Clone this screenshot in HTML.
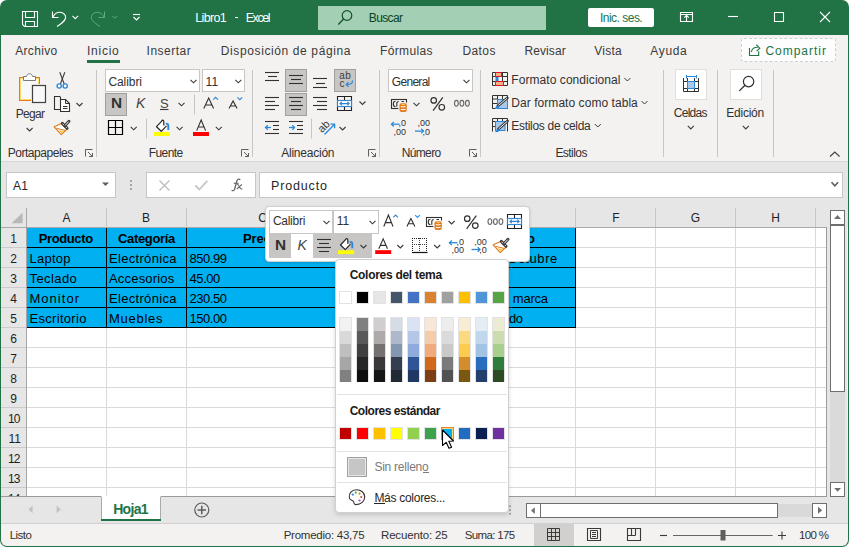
<!DOCTYPE html>
<html><head><meta charset="utf-8"><style>
html,body{margin:0;padding:0;background:#fff;width:849px;height:547px;overflow:hidden}
body{font-family:"Liberation Sans",sans-serif;position:relative}
.a{position:absolute;box-sizing:border-box}
.t{position:absolute;white-space:pre;line-height:1}
svg.a{overflow:visible}
</style></head><body>
<div class="a" style="left:0px;top:0px;width:849px;height:547px;background:#217346;border-radius:7px 7px 7px 7px"></div>
<div class="a" style="left:1px;top:35px;width:847px;height:511px;background:#f3f2f1;border-radius:0 0 6px 6px"></div>
<div class="t" style="left:195.30px;top:12px;font-size:12.5px;color:#fff;letter-spacing:-0.690px;">Libro1</div>
<div class="a" style="left:235px;top:17px;width:3.3px;height:1.2px;background:#fff"></div>
<div class="t" style="left:245.70px;top:12px;font-size:12.5px;color:#fff;letter-spacing:-1.413px;">Excel</div>
<div class="a" style="left:318px;top:6px;width:228px;height:24px;background:#a3cfb4"></div>
<div class="t" style="left:368.80px;top:12px;font-size:12px;color:#0b4424;letter-spacing:-0.630px;">Buscar</div>
<div class="a" style="left:588px;top:8px;width:66px;height:19px;background:#fff;border-radius:2px"></div>
<div class="t" style="left:600.00px;top:12px;font-size:12px;color:#217346;letter-spacing:-0.517px;">Inic. ses.</div>
<div class="t" style="left:15.20px;top:45px;font-size:12px;color:#3b3a39;letter-spacing:0.333px;">Archivo</div>
<div class="t" style="left:87.00px;top:45px;font-size:12px;color:#3b3a39;letter-spacing:0.740px;">Inicio</div>
<div class="t" style="left:146.60px;top:45px;font-size:12px;color:#3b3a39;letter-spacing:0.500px;">Insertar</div>
<div class="t" style="left:220.80px;top:45px;font-size:12px;color:#3b3a39;letter-spacing:0.612px;">Disposición de página</div>
<div class="t" style="left:380.00px;top:45px;font-size:12px;color:#3b3a39;letter-spacing:0.357px;">Fórmulas</div>
<div class="t" style="left:462.50px;top:45px;font-size:12px;color:#3b3a39;letter-spacing:0.387px;">Datos</div>
<div class="t" style="left:524.40px;top:45px;font-size:12px;color:#3b3a39;letter-spacing:0.100px;">Revisar</div>
<div class="t" style="left:594.30px;top:45px;font-size:12px;color:#3b3a39;letter-spacing:0.250px;">Vista</div>
<div class="t" style="left:650.30px;top:45px;font-size:12px;color:#3b3a39;letter-spacing:0.662px;">Ayuda</div>
<div class="a" style="left:87px;top:60px;width:33px;height:3px;background:#217346"></div>
<div class="a" style="left:741px;top:38px;width:95px;height:24px;background:#fdfdfd;border:1px dashed #cfcfcf;border-radius:3px"></div>
<div class="t" style="left:765.40px;top:45px;font-size:12px;color:#217346;letter-spacing:0.987px;">Compartir</div>
<div class="a" style="left:1px;top:161px;width:847px;height:1px;background:#d8d6d4"></div>
<div class="a" style="left:1px;top:162px;width:847px;height:65px;background:#e6e6e6"></div>
<div class="a" style="left:96px;top:70px;width:1px;height:87px;background:#c8c6c4"></div>
<div class="a" style="left:252px;top:70px;width:1px;height:87px;background:#c8c6c4"></div>
<div class="a" style="left:379px;top:70px;width:1px;height:87px;background:#c8c6c4"></div>
<div class="a" style="left:480px;top:70px;width:1px;height:87px;background:#c8c6c4"></div>
<div class="a" style="left:663px;top:70px;width:1px;height:87px;background:#c8c6c4"></div>
<div class="a" style="left:717px;top:70px;width:1px;height:87px;background:#c8c6c4"></div>
<div class="a" style="left:773px;top:70px;width:1px;height:87px;background:#c8c6c4"></div>
<div class="t" style="left:7.70px;top:146.5px;font-size:12px;color:#323130;letter-spacing:-0.464px;">Portapapeles</div>
<div class="t" style="left:15.70px;top:107.7px;font-size:12px;color:#323130;letter-spacing:-0.650px;">Pegar</div>
<div class="t" style="left:148.70px;top:146.5px;font-size:12px;color:#323130;letter-spacing:-0.550px;">Fuente</div>
<div class="t" style="left:281.20px;top:146.5px;font-size:12px;color:#323130;letter-spacing:-0.228px;">Alineación</div>
<div class="t" style="left:401.70px;top:146.5px;font-size:12px;color:#323130;letter-spacing:-0.640px;">Número</div>
<div class="t" style="left:555.40px;top:146.5px;font-size:12px;color:#323130;letter-spacing:-0.558px;">Estilos</div>
<div class="t" style="left:511.30px;top:74px;font-size:12px;color:#323130;letter-spacing:0.064px;">Formato condicional</div>
<div class="t" style="left:511.30px;top:97px;font-size:12px;color:#323130;letter-spacing:0.052px;">Dar formato como tabla</div>
<div class="t" style="left:511.30px;top:120px;font-size:12px;color:#323130;letter-spacing:-0.307px;">Estilos de celda</div>
<div class="t" style="left:673.70px;top:106.5px;font-size:12px;color:#323130;letter-spacing:-0.690px;">Celdas</div>
<div class="t" style="left:726.30px;top:106.5px;font-size:12px;color:#323130;letter-spacing:-0.242px;">Edición</div>
<div class="a" style="left:105px;top:69px;width:95px;height:23px;background:#fff;border:1px solid #c8c6c4"></div>
<div class="t" style="left:108.40px;top:75.5px;font-size:12px;color:#323130;letter-spacing:-0.067px;">Calibri</div>
<div class="a" style="left:202px;top:69px;width:43px;height:23px;background:#fff;border:1px solid #c8c6c4"></div>
<div class="t" style="left:205.60px;top:75.5px;font-size:12px;color:#323130;">11</div>
<div class="a" style="left:388px;top:69px;width:85px;height:23px;background:#fff;border:1px solid #c8c6c4"></div>
<div class="t" style="left:391.80px;top:75.5px;font-size:12px;color:#323130;letter-spacing:-0.700px;">General</div>
<div class="a" style="left:105px;top:93px;width:22px;height:23px;background:#c8c6c4;border:1px solid #a19f9d"></div>
<div class="a" style="left:285px;top:69px;width:22px;height:23px;background:#c8c6c4;border:1px solid #a19f9d"></div>
<div class="a" style="left:285px;top:93px;width:22px;height:23px;background:#c8c6c4;border:1px solid #a19f9d"></div>
<div class="a" style="left:334px;top:69px;width:22px;height:23px;background:#c8c6c4;border:1px solid #a19f9d"></div>
<div class="a" style="left:675px;top:69px;width:32px;height:31px;background:#fff;border:1px solid #e1dfdd"></div>
<div class="a" style="left:730px;top:69px;width:32px;height:31px;background:#fff;border:1px solid #e1dfdd"></div>
<div class="a" style="left:6px;top:172px;width:110px;height:26px;background:#fff;border:1px solid #c6c6c6"></div>
<div class="t" style="left:13.00px;top:180px;font-size:12px;color:#262626;letter-spacing:0.300px;">A1</div>
<div class="a" style="left:146px;top:172px;width:110px;height:26px;background:#fff;border:1px solid #c6c6c6"></div>
<div class="a" style="left:259px;top:172px;width:584px;height:26px;background:#fff;border:1px solid #c6c6c6"></div>
<div class="t" style="left:271.00px;top:180px;font-size:12.5px;color:#262626;letter-spacing:0.850px;">Producto</div>
<div class="a" style="left:27px;top:228px;width:800px;height:269px;background:#fff"></div>
<div class="a" style="left:27px;top:247px;width:800px;height:1px;background:#dadada"></div>
<div class="a" style="left:27px;top:267px;width:800px;height:1px;background:#dadada"></div>
<div class="a" style="left:27px;top:287px;width:800px;height:1px;background:#dadada"></div>
<div class="a" style="left:27px;top:307px;width:800px;height:1px;background:#dadada"></div>
<div class="a" style="left:27px;top:327px;width:800px;height:1px;background:#dadada"></div>
<div class="a" style="left:27px;top:347px;width:800px;height:1px;background:#dadada"></div>
<div class="a" style="left:27px;top:367px;width:800px;height:1px;background:#dadada"></div>
<div class="a" style="left:27px;top:387px;width:800px;height:1px;background:#dadada"></div>
<div class="a" style="left:27px;top:407px;width:800px;height:1px;background:#dadada"></div>
<div class="a" style="left:27px;top:427px;width:800px;height:1px;background:#dadada"></div>
<div class="a" style="left:27px;top:447px;width:800px;height:1px;background:#dadada"></div>
<div class="a" style="left:27px;top:467px;width:800px;height:1px;background:#dadada"></div>
<div class="a" style="left:27px;top:487px;width:800px;height:1px;background:#dadada"></div>
<div class="a" style="left:106px;top:228px;width:1px;height:269px;background:#dadada"></div>
<div class="a" style="left:186px;top:228px;width:1px;height:269px;background:#dadada"></div>
<div class="a" style="left:575px;top:228px;width:1px;height:269px;background:#dadada"></div>
<div class="a" style="left:655px;top:228px;width:1px;height:269px;background:#dadada"></div>
<div class="a" style="left:735px;top:228px;width:1px;height:269px;background:#dadada"></div>
<div class="a" style="left:815px;top:228px;width:1px;height:269px;background:#dadada"></div>
<div class="a" style="left:26px;top:208px;width:1px;height:20px;background:#c6c6c6"></div>
<div class="a" style="left:106px;top:208px;width:1px;height:20px;background:#c6c6c6"></div>
<div class="a" style="left:186px;top:208px;width:1px;height:20px;background:#c6c6c6"></div>
<div class="a" style="left:575px;top:208px;width:1px;height:20px;background:#c6c6c6"></div>
<div class="a" style="left:655px;top:208px;width:1px;height:20px;background:#c6c6c6"></div>
<div class="a" style="left:735px;top:208px;width:1px;height:20px;background:#c6c6c6"></div>
<div class="a" style="left:815px;top:208px;width:1px;height:20px;background:#c6c6c6"></div>
<div class="a" style="left:1px;top:227px;width:826px;height:1px;background:#ababab"></div>
<div class="a" style="left:1px;top:228px;width:25px;height:269px;background:#e6e6e6"></div>
<div class="a" style="left:26px;top:208px;width:1px;height:289px;background:#a6a6a6"></div>
<div class="a" style="left:1px;top:247px;width:25px;height:1px;background:#cbcbcb"></div>
<div class="a" style="left:1px;top:267px;width:25px;height:1px;background:#cbcbcb"></div>
<div class="a" style="left:1px;top:287px;width:25px;height:1px;background:#cbcbcb"></div>
<div class="a" style="left:1px;top:307px;width:25px;height:1px;background:#cbcbcb"></div>
<div class="a" style="left:1px;top:327px;width:25px;height:1px;background:#cbcbcb"></div>
<div class="a" style="left:1px;top:347px;width:25px;height:1px;background:#cbcbcb"></div>
<div class="a" style="left:1px;top:367px;width:25px;height:1px;background:#cbcbcb"></div>
<div class="a" style="left:1px;top:387px;width:25px;height:1px;background:#cbcbcb"></div>
<div class="a" style="left:1px;top:407px;width:25px;height:1px;background:#cbcbcb"></div>
<div class="a" style="left:1px;top:427px;width:25px;height:1px;background:#cbcbcb"></div>
<div class="a" style="left:1px;top:447px;width:25px;height:1px;background:#cbcbcb"></div>
<div class="a" style="left:1px;top:467px;width:25px;height:1px;background:#cbcbcb"></div>
<div class="a" style="left:1px;top:487px;width:25px;height:1px;background:#cbcbcb"></div>
<div class="t" style="left:10.27px;top:233px;font-size:12px;color:#1e1e1e;">1</div>
<div class="t" style="left:10.27px;top:253px;font-size:12px;color:#1e1e1e;">2</div>
<div class="t" style="left:10.27px;top:273px;font-size:12px;color:#1e1e1e;">3</div>
<div class="t" style="left:10.27px;top:293px;font-size:12px;color:#1e1e1e;">4</div>
<div class="t" style="left:10.27px;top:313px;font-size:12px;color:#1e1e1e;">5</div>
<div class="t" style="left:10.27px;top:333px;font-size:12px;color:#1e1e1e;">6</div>
<div class="t" style="left:10.27px;top:353px;font-size:12px;color:#1e1e1e;">7</div>
<div class="t" style="left:10.27px;top:373px;font-size:12px;color:#1e1e1e;">8</div>
<div class="t" style="left:10.27px;top:393px;font-size:12px;color:#1e1e1e;">9</div>
<div class="t" style="left:8.12px;top:413px;font-size:12px;color:#1e1e1e;letter-spacing:-1.050px;">10</div>
<div class="t" style="left:8.58px;top:433px;font-size:12px;color:#1e1e1e;letter-spacing:-0.150px;">11</div>
<div class="t" style="left:8.12px;top:453px;font-size:12px;color:#1e1e1e;letter-spacing:-1.050px;">12</div>
<div class="t" style="left:8.12px;top:473px;font-size:12px;color:#1e1e1e;letter-spacing:-1.050px;">13</div>
<div class="t" style="left:8.12px;top:493px;font-size:12px;color:#1e1e1e;letter-spacing:-1.050px;">14</div>
<div class="t" style="left:62.50px;top:212px;font-size:12px;color:#1e1e1e;">A</div>
<div class="t" style="left:142.00px;top:212px;font-size:12px;color:#1e1e1e;">B</div>
<div class="t" style="left:258.18px;top:212px;font-size:12px;color:#1e1e1e;">C</div>
<div class="t" style="left:612.33px;top:212px;font-size:12px;color:#1e1e1e;">F</div>
<div class="t" style="left:690.83px;top:212px;font-size:12px;color:#1e1e1e;">G</div>
<div class="t" style="left:771.17px;top:212px;font-size:12px;color:#1e1e1e;">H</div>
<div class="a" style="left:27px;top:228px;width:549px;height:100px;background:#00b0f0"></div>
<div class="a" style="left:27px;top:247px;width:549px;height:1px;background:#000"></div>
<div class="a" style="left:27px;top:267px;width:549px;height:1px;background:#000"></div>
<div class="a" style="left:27px;top:287px;width:549px;height:1px;background:#000"></div>
<div class="a" style="left:27px;top:307px;width:549px;height:1px;background:#000"></div>
<div class="a" style="left:27px;top:327px;width:549px;height:1px;background:#000"></div>
<div class="a" style="left:106px;top:228px;width:1px;height:100px;background:#000"></div>
<div class="a" style="left:186px;top:228px;width:1px;height:100px;background:#000"></div>
<div class="a" style="left:575px;top:228px;width:1px;height:100px;background:#000"></div>
<div class="t" style="left:38.70px;top:232px;font-size:13px;color:#000;font-weight:bold;letter-spacing:-0.379px;">Producto</div>
<div class="t" style="left:118.00px;top:232px;font-size:13px;color:#000;font-weight:bold;letter-spacing:-0.338px;">Categoría</div>
<div class="t" style="left:242.90px;top:232px;font-size:13px;color:#000;font-weight:bold;">Prec</div>
<div class="t" style="left:29.50px;top:252px;font-size:13px;color:#000;letter-spacing:0.250px;">Laptop</div>
<div class="t" style="left:109.00px;top:252px;font-size:13px;color:#000;letter-spacing:0.315px;">Electrónica</div>
<div class="t" style="left:189.60px;top:252px;font-size:13px;color:#000;letter-spacing:-0.470px;">850.99</div>
<div class="t" style="left:29.50px;top:272px;font-size:13px;color:#000;letter-spacing:0.417px;">Teclado</div>
<div class="t" style="left:109.00px;top:272px;font-size:13px;color:#000;letter-spacing:0.189px;">Accesorios</div>
<div class="t" style="left:189.60px;top:272px;font-size:13px;color:#000;letter-spacing:-0.462px;">45.00</div>
<div class="t" style="left:29.50px;top:292px;font-size:13px;color:#000;letter-spacing:1.025px;">Monitor</div>
<div class="t" style="left:109.00px;top:292px;font-size:13px;color:#000;letter-spacing:0.315px;">Electrónica</div>
<div class="t" style="left:189.60px;top:292px;font-size:13px;color:#000;letter-spacing:-0.470px;">230.50</div>
<div class="t" style="left:29.50px;top:312px;font-size:13px;color:#000;letter-spacing:0.300px;">Escritorio</div>
<div class="t" style="left:109.00px;top:312px;font-size:13px;color:#000;letter-spacing:0.725px;">Muebles</div>
<div class="t" style="left:189.60px;top:312px;font-size:13px;color:#000;letter-spacing:-0.470px;">150.00</div>
<div class="t" style="left:507.50px;top:252px;font-size:13px;color:#000;letter-spacing:0.592px;">Octubre</div>
<div class="t" style="left:512.80px;top:292px;font-size:13px;color:#000;letter-spacing:-0.237px;">marca</div>
<div class="t" style="left:509.00px;top:312px;font-size:13px;color:#000;letter-spacing:-0.450px;">do</div>
<div class="t" style="left:527.00px;top:232px;font-size:13px;color:#000;font-weight:bold;">o</div>
<div class="a" style="left:826px;top:208px;width:21px;height:289px;background:#e6e6e6"></div>
<div class="a" style="left:826px;top:227px;width:1px;height:270px;background:#9a9a9a"></div>
<div class="a" style="left:830px;top:391px;width:15px;height:91px;background:#dadada"></div>
<div class="a" style="left:830px;top:210px;width:15px;height:15px;background:#fff;border:1px solid #6e6e6e"></div>
<div class="a" style="left:830px;top:225px;width:15px;height:167px;background:#fff;border:1px solid #6e6e6e"></div>
<div class="a" style="left:830px;top:482px;width:15px;height:15px;background:#fff;border:1px solid #6e6e6e"></div>
<div class="a" style="left:1px;top:497px;width:847px;height:27px;background:#e6e6e6"></div>
<div class="a" style="left:1px;top:496px;width:826px;height:1px;background:#9a9a9a"></div>
<div class="a" style="left:101px;top:496px;width:60px;height:25px;background:#fff;border-left:1px solid #ababab;border-right:1px solid #ababab;border-top:1px solid #fff"></div>
<div class="a" style="left:101px;top:519px;width:60px;height:2px;background:#217346"></div>
<div class="t" style="left:113.20px;top:502px;font-size:14px;color:#217346;font-weight:bold;letter-spacing:-0.700px;">Hoja1</div>
<div class="a" style="left:526px;top:503px;width:15px;height:15px;background:#fff;border:1px solid #6e6e6e"></div>
<div class="a" style="left:540px;top:503px;width:238px;height:15px;background:#fff;border:1px solid #6e6e6e"></div>
<div class="a" style="left:778px;top:504px;width:34px;height:13px;background:#d9d9d9"></div>
<div class="a" style="left:812px;top:503px;width:15px;height:15px;background:#fff;border:1px solid #6e6e6e"></div>
<div class="a" style="left:1px;top:523px;width:847px;height:1px;background:#d0d0d0"></div>
<div class="t" style="left:9.80px;top:530px;font-size:11.5px;color:#323130;letter-spacing:-0.575px;">Listo</div>
<div class="t" style="left:283.70px;top:530px;font-size:11.5px;color:#323130;letter-spacing:-0.250px;">Promedio: 43,75</div>
<div class="t" style="left:381.00px;top:530px;font-size:11.5px;color:#323130;letter-spacing:-0.164px;">Recuento: 25</div>
<div class="t" style="left:464.70px;top:530px;font-size:11.5px;color:#323130;letter-spacing:-0.638px;">Suma: 175</div>
<div class="a" style="left:534px;top:524px;width:40px;height:22px;background:#d2d0ce"></div>
<div class="t" style="left:799.00px;top:530px;font-size:11.5px;color:#323130;letter-spacing:-0.650px;">100 %</div>
<div class="a" style="left:265px;top:206px;width:265px;height:56px;background:#fff;border:1px solid #d0d0d0;border-radius:4px;box-shadow:0 1px 3px rgba(0,0,0,.15)"></div>
<div class="a" style="left:269px;top:210px;width:64px;height:24px;background:#fff;border:1px solid #c8c6c4"></div>
<div class="a" style="left:333px;top:210px;width:46px;height:24px;background:#fff;border:1px solid #c8c6c4"></div>
<div class="t" style="left:272.90px;top:215px;font-size:12px;color:#323130;letter-spacing:-0.267px;">Calibri</div>
<div class="t" style="left:336.70px;top:215px;font-size:12px;color:#323130;">11</div>
<div class="a" style="left:269px;top:234px;width:22px;height:24px;background:#c8c6c4"></div>
<div class="a" style="left:313px;top:234px;width:59px;height:24px;background:#c8c6c4"></div>
<div class="a" style="left:335px;top:259px;width:174px;height:254px;background:#fff;border:1px solid #d0d0d0;border-radius:4px;box-shadow:0 2px 4px rgba(0,0,0,.15)"></div>
<div class="t" style="left:349.70px;top:269px;font-size:12px;color:#1a1a1a;font-weight:bold;letter-spacing:-0.287px;">Colores del tema</div>
<div class="t" style="left:349.70px;top:405px;font-size:12px;color:#1a1a1a;font-weight:bold;letter-spacing:-0.483px;">Colores estándar</div>
<div class="t" style="left:374.40px;top:461px;font-size:12px;color:#7a7a7a;letter-spacing:-0.240px;">Sin relleno</div>
<div class="a" style="left:422.5px;top:471.5px;width:6.5px;height:1px;background:#7a7a7a"></div>
<div class="t" style="left:374.40px;top:492px;font-size:12px;color:#262626;letter-spacing:-0.285px;">Más colores...</div>
<div class="a" style="left:339px;top:291px;width:13px;height:13px;background:#FFFFFF;border:1px solid #e2e2e2"></div>
<div class="a" style="left:339px;top:317px;width:13px;height:65px;background:#e2e2e2"></div>
<div class="a" style="left:340px;top:318px;width:11px;height:13px;background:#F2F2F2"></div>
<div class="a" style="left:340px;top:331px;width:11px;height:13px;background:#D9D9D9"></div>
<div class="a" style="left:340px;top:344px;width:11px;height:13px;background:#BFBFBF"></div>
<div class="a" style="left:340px;top:357px;width:11px;height:13px;background:#A6A6A6"></div>
<div class="a" style="left:340px;top:370px;width:11px;height:12px;background:#808080"></div>
<div class="a" style="left:339px;top:427px;width:13px;height:13px;background:#C00000;border:1px solid #e2e2e2"></div>
<div class="a" style="left:356px;top:291px;width:13px;height:13px;background:#000000;border:1px solid #e2e2e2"></div>
<div class="a" style="left:356px;top:317px;width:13px;height:65px;background:#e2e2e2"></div>
<div class="a" style="left:357px;top:318px;width:11px;height:13px;background:#808080"></div>
<div class="a" style="left:357px;top:331px;width:11px;height:13px;background:#595959"></div>
<div class="a" style="left:357px;top:344px;width:11px;height:13px;background:#404040"></div>
<div class="a" style="left:357px;top:357px;width:11px;height:13px;background:#262626"></div>
<div class="a" style="left:357px;top:370px;width:11px;height:12px;background:#0D0D0D"></div>
<div class="a" style="left:356px;top:427px;width:13px;height:13px;background:#FF0000;border:1px solid #e2e2e2"></div>
<div class="a" style="left:373px;top:291px;width:13px;height:13px;background:#E7E6E6;border:1px solid #e2e2e2"></div>
<div class="a" style="left:373px;top:317px;width:13px;height:65px;background:#e2e2e2"></div>
<div class="a" style="left:374px;top:318px;width:11px;height:13px;background:#D0CECE"></div>
<div class="a" style="left:374px;top:331px;width:11px;height:13px;background:#AEAAAA"></div>
<div class="a" style="left:374px;top:344px;width:11px;height:13px;background:#757171"></div>
<div class="a" style="left:374px;top:357px;width:11px;height:13px;background:#3A3838"></div>
<div class="a" style="left:374px;top:370px;width:11px;height:12px;background:#171616"></div>
<div class="a" style="left:373px;top:427px;width:13px;height:13px;background:#FFC000;border:1px solid #e2e2e2"></div>
<div class="a" style="left:390px;top:291px;width:13px;height:13px;background:#44546A;border:1px solid #e2e2e2"></div>
<div class="a" style="left:390px;top:317px;width:13px;height:65px;background:#e2e2e2"></div>
<div class="a" style="left:391px;top:318px;width:11px;height:13px;background:#D6DCE5"></div>
<div class="a" style="left:391px;top:331px;width:11px;height:13px;background:#ADB9CA"></div>
<div class="a" style="left:391px;top:344px;width:11px;height:13px;background:#8497B0"></div>
<div class="a" style="left:391px;top:357px;width:11px;height:13px;background:#333F50"></div>
<div class="a" style="left:391px;top:370px;width:11px;height:12px;background:#222A35"></div>
<div class="a" style="left:390px;top:427px;width:13px;height:13px;background:#FFFF00;border:1px solid #e2e2e2"></div>
<div class="a" style="left:407px;top:291px;width:13px;height:13px;background:#4472C4;border:1px solid #e2e2e2"></div>
<div class="a" style="left:407px;top:317px;width:13px;height:65px;background:#e2e2e2"></div>
<div class="a" style="left:408px;top:318px;width:11px;height:13px;background:#DAE3F3"></div>
<div class="a" style="left:408px;top:331px;width:11px;height:13px;background:#B4C7E7"></div>
<div class="a" style="left:408px;top:344px;width:11px;height:13px;background:#8FAADC"></div>
<div class="a" style="left:408px;top:357px;width:11px;height:13px;background:#2F5597"></div>
<div class="a" style="left:408px;top:370px;width:11px;height:12px;background:#203864"></div>
<div class="a" style="left:407px;top:427px;width:13px;height:13px;background:#92D050;border:1px solid #e2e2e2"></div>
<div class="a" style="left:424px;top:291px;width:13px;height:13px;background:#DA8230;border:1px solid #e2e2e2"></div>
<div class="a" style="left:424px;top:317px;width:13px;height:65px;background:#e2e2e2"></div>
<div class="a" style="left:425px;top:318px;width:11px;height:13px;background:#F8E6D6"></div>
<div class="a" style="left:425px;top:331px;width:11px;height:13px;background:#F6CBAA"></div>
<div class="a" style="left:425px;top:344px;width:11px;height:13px;background:#F1AA7C"></div>
<div class="a" style="left:425px;top:357px;width:11px;height:13px;background:#D2681C"></div>
<div class="a" style="left:425px;top:370px;width:11px;height:12px;background:#7C3E12"></div>
<div class="a" style="left:424px;top:427px;width:13px;height:13px;background:#3DA24D;border:1px solid #e2e2e2"></div>
<div class="a" style="left:441px;top:291px;width:13px;height:13px;background:#A0A0A0;border:1px solid #e2e2e2"></div>
<div class="a" style="left:441px;top:317px;width:13px;height:65px;background:#e2e2e2"></div>
<div class="a" style="left:442px;top:318px;width:11px;height:13px;background:#EDEDED"></div>
<div class="a" style="left:442px;top:331px;width:11px;height:13px;background:#DBDBDB"></div>
<div class="a" style="left:442px;top:344px;width:11px;height:13px;background:#C9C9C9"></div>
<div class="a" style="left:442px;top:357px;width:11px;height:13px;background:#7B7B7B"></div>
<div class="a" style="left:442px;top:370px;width:11px;height:12px;background:#525252"></div>
<div class="a" style="left:441px;top:427px;width:13px;height:13px;background:#00B0F0;border:1px solid #e2e2e2"></div>
<div class="a" style="left:458px;top:291px;width:13px;height:13px;background:#FFC000;border:1px solid #e2e2e2"></div>
<div class="a" style="left:458px;top:317px;width:13px;height:65px;background:#e2e2e2"></div>
<div class="a" style="left:459px;top:318px;width:11px;height:13px;background:#F8EDD2"></div>
<div class="a" style="left:459px;top:331px;width:11px;height:13px;background:#FBD97E"></div>
<div class="a" style="left:459px;top:344px;width:11px;height:13px;background:#FBCC4E"></div>
<div class="a" style="left:459px;top:357px;width:11px;height:13px;background:#D38D2C"></div>
<div class="a" style="left:459px;top:370px;width:11px;height:12px;background:#7A5812"></div>
<div class="a" style="left:458px;top:427px;width:13px;height:13px;background:#1F6CC0;border:1px solid #e2e2e2"></div>
<div class="a" style="left:475px;top:291px;width:13px;height:13px;background:#4F95D8;border:1px solid #e2e2e2"></div>
<div class="a" style="left:475px;top:317px;width:13px;height:65px;background:#e2e2e2"></div>
<div class="a" style="left:476px;top:318px;width:11px;height:13px;background:#E4ECF5"></div>
<div class="a" style="left:476px;top:331px;width:11px;height:13px;background:#C0D7EC"></div>
<div class="a" style="left:476px;top:344px;width:11px;height:13px;background:#A3C3E5"></div>
<div class="a" style="left:476px;top:357px;width:11px;height:13px;background:#2A6DBE"></div>
<div class="a" style="left:476px;top:370px;width:11px;height:12px;background:#223F6E"></div>
<div class="a" style="left:475px;top:427px;width:13px;height:13px;background:#0A2052;border:1px solid #e2e2e2"></div>
<div class="a" style="left:492px;top:291px;width:13px;height:13px;background:#55A546;border:1px solid #e2e2e2"></div>
<div class="a" style="left:492px;top:317px;width:13px;height:65px;background:#e2e2e2"></div>
<div class="a" style="left:493px;top:318px;width:11px;height:13px;background:#ECECD4"></div>
<div class="a" style="left:493px;top:331px;width:11px;height:13px;background:#CBDDAE"></div>
<div class="a" style="left:493px;top:344px;width:11px;height:13px;background:#A8D08C"></div>
<div class="a" style="left:493px;top:357px;width:11px;height:13px;background:#2E7D3C"></div>
<div class="a" style="left:493px;top:370px;width:11px;height:12px;background:#2D4C24"></div>
<div class="a" style="left:492px;top:427px;width:13px;height:13px;background:#7030A0;border:1px solid #e2e2e2"></div>
<div class="a" style="left:441px;top:427px;width:13px;height:13px;background:#00B0F0;border:1px solid #E8862A;box-shadow:inset 0 0 0 1px #FFD27A"></div>
<div class="a" style="left:337px;top:394px;width:170px;height:1px;background:#e3e3e3"></div>
<div class="a" style="left:337px;top:451px;width:170px;height:1px;background:#e3e3e3"></div>
<div class="a" style="left:337px;top:482px;width:170px;height:1px;background:#e3e3e3"></div>
<div class="a" style="left:347px;top:457px;width:20px;height:20px;background:#c6c6c6;border:1px solid #a0a0a0;box-shadow:inset 0 0 0 1px #e6e6e6"></div>
<div class="a" style="left:374.2px;top:503px;width:10.5px;height:1px;background:#262626"></div>
<svg class="a" style="left:0px;top:0px;" width="849" height="35" viewBox="0 0 849 35">
<path d="M22.5,11.5 H37.5 V26.5 H24.5 L22.5,24.5 Z" stroke="#fff" fill="none" stroke-width="1.1"/>
<path d="M25.5,11.5 V17.5 H34.5 V11.5" stroke="#fff" fill="none" stroke-width="1.1"/>
<path d="M25.5,26.5 V21.5 H34.5 V26.5" stroke="#fff" fill="none" stroke-width="1.1"/>
<path d="M52.5,11.5 V17.5 H58.5" stroke="#fff" fill="none" stroke-width="1.1"/>
<path d="M53,17 C55.5,11.5 62.5,10.5 65.3,15.5 C67,19 64,22 57,26.5" stroke="#fff" fill="none" stroke-width="1.1"/>
<path d="M72.5,15.8 L75.3,18.6 L78.1,15.8" stroke="#fff" fill="none" stroke-width="1.1"/>
<path d="M104.5,11.5 V17.5 H98.5" stroke="#5aae7b" fill="none" stroke-width="1"/>
<path d="M104,17 C101.5,11.5 94.5,10.5 91.7,15.5 C90,19 93,22 100,26.5" stroke="#5aae7b" fill="none" stroke-width="1"/>
<path d="M112.5,16 L114.8,18.3 L117.1,16" stroke="#5aae7b" fill="none" stroke-width="1"/>
<path d="M133,14.5 H140" stroke="#fff" fill="none" stroke-width="1.1"/>
<path d="M133.5,17 L136.5,20 L139.5,17" stroke="#fff" fill="none" stroke-width="1.1"/>
<circle cx="347" cy="15.5" r="4.8" stroke="#10502b" fill="none" stroke-width="1.2"/>
<path d="M343.6,19 L338.3,24.5" stroke="#10502b" fill="none" stroke-width="1.3"/>
<path d="M680.5,12.5 H692.5 V21.5 H680.5 Z M680.5,14.5 H692.5" stroke="#fff" fill="none" stroke-width="1.1"/>
<path d="M686.5,21 V15.3 M684.2,17.6 L686.5,15.3 L688.8,17.6" stroke="#fff" fill="none" stroke-width="1.1"/>
<path d="M728,16.5 H738" stroke="#fff" fill="none" stroke-width="1.1"/>
<path d="M774.5,12.5 H783.5 V21.5 H774.5 Z" stroke="#fff" fill="none" stroke-width="1.1"/>
<path d="M820,12 L830,22 M830,12 L820,22" stroke="#fff" fill="none" stroke-width="1.1"/>
</svg>
<svg class="a" style="left:0px;top:0px;" width="849" height="165" viewBox="0 0 849 165"><rect x="19.5" y="77.5" width="20" height="23" fill="#f8f8f8" stroke="#e07b1f"/><rect x="20.5" y="78.5" width="18" height="21" fill="none" stroke="#ffd966"/><path d="M23.5,80.5 V76.5 H26.5 C27,72.8 32,72.8 32.5,76.5 H35.5 V80.5 Z" fill="#fff" stroke="#7a7a7a"/><rect x="31" y="84" width="17" height="20" fill="#f3f2f1"/><rect x="32.5" y="85.5" width="13" height="17" fill="#f8f8f8" stroke="#404040" stroke-width="1.2"/><path d="M26.6,128.0 L29.6,131.0 L32.6,128.0" stroke="#3b3a39" fill="none" stroke-width="1.1"/><path d="M59.8,72.3 L64.3,84.2" stroke="#3b3a39" stroke-width="1.05" fill="none"/><path d="M64.8,72.3 L60.3,84.2" stroke="#3b3a39" stroke-width="1.05" fill="none"/><circle cx="59.2" cy="86" r="2.1" fill="#fff" stroke="#2b88d8" stroke-width="1.4"/><circle cx="65.2" cy="86" r="2.1" fill="#fff" stroke="#2b88d8" stroke-width="1.4"/><path d="M60.5,99 V97.5 Q60.5,96.5 59.5,96.5 H54.5 V109.5 H60" stroke="#323130" fill="none" stroke-width="1.1"/><path d="M60.5,99.5 H65.5 L69.5,103.5 V111.5 H60.5 Z" stroke="#323130" fill="#fff" stroke-width="1.1"/><path d="M65.5,99.5 V103.5 H69.5" stroke="#323130" fill="none" stroke-width="1"/><path d="M63,106.5 L67.5,106.5" stroke="#323130" stroke-width="1" fill="none"/><path d="M63,108.5 L67.5,108.5" stroke="#323130" stroke-width="1" fill="none"/><path d="M76.5,103.0 L79.5,106.0 L82.5,103.0" stroke="#3b3a39" fill="none" stroke-width="1.1"/><g transform="translate(0,0)"><path d="M54.2,126.8 L61.5,123.5 L66.8,129.2 L61.3,134.6 Z" fill="#fff" stroke="#e07b1f" stroke-width="1.2" stroke-linejoin="round"/><path d="M56.5,128.3 L65.4,130.5" stroke="#e07b1f" stroke-width="1"/><path d="M58.8,130 L64,131.2 L61.3,133.5 Z" fill="#ffc94d"/><path d="M62.3,123.4 L67.1,128.3" stroke="#3b3a39" stroke-width="3" stroke-linecap="round"/><path d="M62.6,123.8 L66.8,127.9" stroke="#fff" stroke-width="1"/><path d="M64.9,125.7 L69,121.3" stroke="#3b3a39" stroke-width="3" stroke-linecap="round"/><path d="M65.2,125.4 L68.7,121.6" stroke="#fff" stroke-width="1"/></g><path d="M85.5,156.5 V149.5 H92.5" stroke="#605e5c" fill="none" stroke-width="1"/><path d="M88,152 L92.5,156.5 M92.5,153 V156.5 H89" stroke="#605e5c" fill="none" stroke-width="1"/><path d="M190.5,79.8 L193.5,82.8 L196.5,79.8" stroke="#3b3a39" fill="none" stroke-width="1.1"/><path d="M235.3,79.8 L238.3,82.8 L241.3,79.8" stroke="#3b3a39" fill="none" stroke-width="1.1"/><path d="M178.5,102.8 L181.5,105.8 L184.5,102.8" stroke="#3b3a39" fill="none" stroke-width="1.1"/><path d="M160,109.5 L168.5,109.5" stroke="#3b3a39" stroke-width="1.1" fill="none"/><path d="M213.2,99.7 L215.6,97.3 L218,99.7" stroke="#2b88d8" fill="none" stroke-width="1.1"/><path d="M237.4,97.3 L239.8,99.7 L242.2,97.3" stroke="#2b88d8" fill="none" stroke-width="1.1"/><path d="M194.5,94.5 L194.5,114.5" stroke="#c8c6c4" stroke-width="1" fill="none"/><path d="M108.5,120.5 H122.5 V134.5 H108.5 Z M115.5,120.5 V134.5 M108.5,127.5 H122.5" stroke="#000" fill="none" stroke-width="1.2"/><path d="M130.7,126.80000000000001 L133.7,129.8 L136.7,126.80000000000001" stroke="#3b3a39" fill="none" stroke-width="1.1"/><path d="M146.5,118.5 L146.5,138.5" stroke="#c8c6c4" stroke-width="1" fill="none"/><g transform="translate(0,0)"><path d="M163.8,125.5 V121.6 Q163.6,120.1 162.6,120.2 Q161.9,120.4 161.5,121.4 L156.5,126.7 L161.3,131.3 L166.5,125.9" stroke="#262626" fill="#fff" stroke-width="1.2" stroke-linejoin="round"/><path d="M165.8,124 Q168.3,122.8 168.3,126 V130" stroke="#2b88d8" stroke-width="1.9" fill="none"/></g><path d="M203.8,108.5 L208.7,98 L213.6,108.5 M205.496,104.93 H211.904" stroke="#323130" fill="none" stroke-width="1.1"/><path d="M229.0,108.5 L233.05,101 L237.1,108.5 M230.424,105.95 H235.676" stroke="#323130" fill="none" stroke-width="1.1"/><path d="M196.70000000000002,130.6 L201.15,120 L205.6,130.6 M198.252,126.996 H204.048" stroke="#323130" fill="none" stroke-width="1.1"/><rect x="154" y="132" width="16" height="4" fill="#ffff00"/><path d="M176.6,126.80000000000001 L179.6,129.8 L182.6,126.80000000000001" stroke="#3b3a39" fill="none" stroke-width="1.1"/><rect x="193" y="132" width="16" height="4" fill="#ff0000"/><path d="M215.8,126.80000000000001 L218.8,129.8 L221.8,126.80000000000001" stroke="#3b3a39" fill="none" stroke-width="1.1"/><path d="M241.5,156.5 V149.5 H248.5" stroke="#605e5c" fill="none" stroke-width="1"/><path d="M244,152 L248.5,156.5 M248.5,153 V156.5 H245" stroke="#605e5c" fill="none" stroke-width="1"/><path d="M265,72.5 L279,72.5" stroke="#323130" stroke-width="1.1" fill="none"/><path d="M268,76.5 L277,76.5" stroke="#323130" stroke-width="1.1" fill="none"/><path d="M265,80.5 L279,80.5" stroke="#323130" stroke-width="1.1" fill="none"/><path d="M289,75.5 L303,75.5" stroke="#323130" stroke-width="1.1" fill="none"/><path d="M291,79.5 L301,79.5" stroke="#323130" stroke-width="1.1" fill="none"/><path d="M289,83.5 L303,83.5" stroke="#323130" stroke-width="1.1" fill="none"/><path d="M313,78.5 L327,78.5" stroke="#323130" stroke-width="1.1" fill="none"/><path d="M316,83.5 L325,83.5" stroke="#323130" stroke-width="1.1" fill="none"/><path d="M313,87.5 L327,87.5" stroke="#323130" stroke-width="1.1" fill="none"/><path d="M265,97.5 L279,97.5" stroke="#323130" stroke-width="1.1" fill="none"/><path d="M265,101.5 L275,101.5" stroke="#323130" stroke-width="1.1" fill="none"/><path d="M265,105.5 L279,105.5" stroke="#323130" stroke-width="1.1" fill="none"/><path d="M265,109.5 L275,109.5" stroke="#323130" stroke-width="1.1" fill="none"/><path d="M289,97.5 L303,97.5" stroke="#323130" stroke-width="1.1" fill="none"/><path d="M291,101.5 L301,101.5" stroke="#323130" stroke-width="1.1" fill="none"/><path d="M289,105.5 L303,105.5" stroke="#323130" stroke-width="1.1" fill="none"/><path d="M291,109.5 L301,109.5" stroke="#323130" stroke-width="1.1" fill="none"/><path d="M313,97.5 L327,97.5" stroke="#323130" stroke-width="1.1" fill="none"/><path d="M317,101.5 L327,101.5" stroke="#323130" stroke-width="1.1" fill="none"/><path d="M313,105.5 L327,105.5" stroke="#323130" stroke-width="1.1" fill="none"/><path d="M317,109.5 L327,109.5" stroke="#323130" stroke-width="1.1" fill="none"/><text x="339.2" y="79.4" font-family="Liberation Sans" font-size="10" letter-spacing="0.6" fill="#3b3a39">ab</text><text x="339.4" y="87.2" font-family="Liberation Sans" font-size="10" fill="#3b3a39">c</text><path d="M352.3,80.5 Q353.5,84.6 346.5,84.6" stroke="#2b88d8" fill="none" stroke-width="1.3"/><path d="M348.6,82.3 L346.2,84.6 L348.6,86.8" stroke="#2b88d8" fill="none" stroke-width="1.2"/><path d="M337.5,96.5 H351.5 V110.5 H337.5 Z M344.5,96.5 V100.5 M344.5,106.5 V110.5" stroke="#222" fill="none" stroke-width="1.1"/><rect x="337.5" y="100.5" width="14" height="6" fill="#fff" stroke="#2b88d8" stroke-width="1.1"/><path d="M340,103.6 H349.2 M341.8,101.9 L340,103.6 L341.8,105.3 M347.4,101.9 L349.2,103.6 L347.4,105.3" stroke="#2b88d8" fill="none" stroke-width="1.1"/><path d="M359.5,101.5 L362.5,104.5 L365.5,101.5" stroke="#3b3a39" fill="none" stroke-width="1.1"/><path d="M265,121.5 L279,121.5" stroke="#323130" stroke-width="1.1" fill="none"/><path d="M273,125.5 L279,125.5" stroke="#323130" stroke-width="1.1" fill="none"/><path d="M273,129.5 L279,129.5" stroke="#323130" stroke-width="1.1" fill="none"/><path d="M265,133.5 L279,133.5" stroke="#323130" stroke-width="1.1" fill="none"/><path d="M265.6,127.5 L270.9,127.5" stroke="#2b88d8" stroke-width="1.3" fill="none"/><path d="M267.8,125.3 L265.6,127.5 L267.8,129.7" stroke="#2b88d8" fill="none" stroke-width="1.3"/><path d="M289,121.5 L303,121.5" stroke="#323130" stroke-width="1.1" fill="none"/><path d="M297,125.5 L303,125.5" stroke="#323130" stroke-width="1.1" fill="none"/><path d="M297,129.5 L303,129.5" stroke="#323130" stroke-width="1.1" fill="none"/><path d="M289,133.5 L303,133.5" stroke="#323130" stroke-width="1.1" fill="none"/><path d="M289,127.5 L294.5,127.5" stroke="#2b88d8" stroke-width="1.3" fill="none"/><path d="M292.3,125.3 L294.5,127.5 L292.3,129.7" stroke="#2b88d8" fill="none" stroke-width="1.3"/><path d="M311.5,118.5 L311.5,138.5" stroke="#c8c6c4" stroke-width="1" fill="none"/><text x="0" y="0" font-family="Liberation Sans" font-size="11" fill="#3b3a39" transform="translate(322,133.3) rotate(-45)">ab</text><path d="M324.5,134.5 L334.5,124.3" stroke="#2b88d8" stroke-width="1.3" fill="none"/><path d="M330.5,124.2 H334.6 V128.3" stroke="#2b88d8" fill="none" stroke-width="1.3"/><path d="M339.6,127.0 L342.6,130.0 L345.6,127.0" stroke="#3b3a39" fill="none" stroke-width="1.1"/><path d="M368.5,156.5 V149.5 H375.5" stroke="#605e5c" fill="none" stroke-width="1"/><path d="M371,152 L375.5,156.5 M375.5,153 V156.5 H372" stroke="#605e5c" fill="none" stroke-width="1"/><path d="M463.5,79.8 L466.5,82.8 L469.5,79.8" stroke="#3b3a39" fill="none" stroke-width="1.1"/><g transform="translate(0,0)"><rect x="391.5" y="99.5" width="15" height="9" fill="none" stroke="#323130" stroke-width="1.1"/><path d="M395.5,101.3 Q393.3,101.3 393.3,104 Q393.3,106.7 395.5,106.7" stroke="#323130" stroke-width="1.1" fill="none"/><path d="M396.8,106.7 V103 Q397.3,101.5 398.6,101.6 M401.5,101.5 H404" stroke="#323130" stroke-width="1.1" fill="none"/><rect x="398.4" y="102.3" width="9.4" height="10.6" rx="2.5" fill="#f3f2f1"/><rect x="399.5" y="103.3" width="7.3" height="8.6" rx="2" fill="#e07b1f"/><path d="M400.8,106.5 Q403.2,107.4 405.6,106.5 M400.8,109.3 Q403.2,110.2 405.6,109.3" stroke="#fff" stroke-width="1.1" fill="none"/><path d="M401.5,104.6 H404.8" stroke="#ffd24d" stroke-width="1"/></g><path d="M413.5,102.8 L416.5,105.8 L419.5,102.8" stroke="#3b3a39" fill="none" stroke-width="1.1"/><g transform="translate(0,0)"><circle cx="433.75" cy="100.4" r="2.75" stroke="#323130" fill="none" stroke-width="1.2"/><circle cx="441.8" cy="107.3" r="2.8" stroke="#323130" fill="none" stroke-width="1.2"/><path d="M442.8,97.3 L433.1,110.6" stroke="#323130" stroke-width="1.2"/><ellipse cx="456.4" cy="103.3" rx="1.9" ry="2.9" stroke="#666" fill="none" stroke-width="1.1"/><ellipse cx="461.9" cy="103.3" rx="1.9" ry="2.9" stroke="#666" fill="none" stroke-width="1.1"/><ellipse cx="467.4" cy="103.3" rx="1.9" ry="2.9" stroke="#666" fill="none" stroke-width="1.1"/></g><text x="398.6" y="126.4" font-family="Liberation Sans" font-size="9" fill="#323130">,0</text><text x="393.6" y="134.9" font-family="Liberation Sans" font-size="9" fill="#323130">,00</text><path d="M391.5,124.2 L399.5,124.2" stroke="#2b88d8" stroke-width="1.3" fill="none"/><path d="M393.8,121.9 L391.5,124.2 L393.8,126.5" stroke="#2b88d8" fill="none" stroke-width="1.3"/><text x="417.6" y="126.4" font-family="Liberation Sans" font-size="9" fill="#323130">,00</text><text x="422.6" y="134.9" font-family="Liberation Sans" font-size="9" fill="#323130">,0</text><path d="M415,131.1 L423.5,131.1" stroke="#2b88d8" stroke-width="1.3" fill="none"/><path d="M421.2,128.8 L423.5,131.1 L421.2,133.4" stroke="#2b88d8" fill="none" stroke-width="1.3"/><path d="M469.5,156.5 V149.5 H476.5" stroke="#605e5c" fill="none" stroke-width="1"/><path d="M472,152 L476.5,156.5 M476.5,153 V156.5 H473" stroke="#605e5c" fill="none" stroke-width="1"/><path d="M492.5,72.5 H507.5 V85.5 H492.5 Z M497.5,72.5 V85.5 M502.5,72.5 V85.5 M492.5,76.5 H507.5 M492.5,81.5 H507.5" stroke="#323130" fill="none" stroke-width="1"/><rect x="495.5" y="72.5" width="6" height="4" fill="#f4b183" stroke="#e81123" stroke-width="1"/><rect x="495.5" y="77" width="3" height="4.5" fill="#2b88d8"/><rect x="495.5" y="81.5" width="8" height="4" fill="#f4b183" stroke="#e81123" stroke-width="1"/><path d="M492.5,108.5 V95.5 H507.5 V99 M497.5,95.5 V108.5 M502.5,95.5 V99 M492.5,99 H497.5 M492.5,103.5 H497.5 M492.5,108.5 H495" stroke="#323130" fill="none" stroke-width="1"/><rect x="497.5" y="99.5" width="10" height="9" fill="#a9c8ec" stroke="#2b88d8" stroke-width="1"/><path d="M497.8,106.0 L507.3,98" stroke="#3b3a39" stroke-width="2.8" stroke-linecap="round"/><path d="M498.3,105.5 L507.0,98.3" stroke="#fff" stroke-width="0.9"/><path d="M494.8,109.0 Q495.8,105.0 499.3,105.5 Q499.8,109.0 494.8,109.0 Z" fill="#2b88d8"/><path d="M492.5,131.5 V118.5 H507.5 V131.5 M497.5,118.5 V121.5 M502.5,118.5 V121.5 M492.5,121.5 H507.5 M492.5,126.5 H495" stroke="#323130" fill="none" stroke-width="1"/><rect x="495.5" y="121.5" width="9.5" height="9" fill="#a9c8ec" stroke="#2b88d8" stroke-width="1"/><path d="M498.3,129.3 L507.5,121" stroke="#3b3a39" stroke-width="2.8" stroke-linecap="round"/><path d="M498.8,128.8 L507.2,121.3" stroke="#fff" stroke-width="0.9"/><path d="M495.3,132.3 Q496.3,128.3 499.8,128.8 Q500.3,132.3 495.3,132.3 Z" fill="#2b88d8"/><path d="M624.4,78.0 L627.4,81.0 L630.4,78.0" stroke="#3b3a39" fill="none" stroke-width="1"/><path d="M641.5,101.0 L644.5,104.0 L647.5,101.0" stroke="#3b3a39" fill="none" stroke-width="1"/><path d="M594.8,124.0 L597.8,127.0 L600.8,124.0" stroke="#3b3a39" fill="none" stroke-width="1"/><path d="M683.5,78 V91.5 H698.5 V78 M687.5,78 V91.5 M694.5,78 V91.5 M683.5,81.5 H698.5 M683.5,88.5 H698.5" stroke="#323130" fill="none" stroke-width="1"/><rect x="687.5" y="81.5" width="7" height="7" fill="#a9c8ec" stroke="#2b88d8" stroke-width="1"/><path d="M686.5,76.5 H696.5 M686.5,75 V78.5 M696.5,75 V78.5" stroke="#2b88d8" fill="none" stroke-width="1"/><path d="M687.8,125.9 L690.8,128.9 L693.8,125.9" stroke="#3b3a39" fill="none" stroke-width="1.1"/><circle cx="748.6" cy="81.6" r="5.2" stroke="#323130" fill="none" stroke-width="1.2"/><path d="M745,85.2 L739.3,90.9" stroke="#323130" stroke-width="1.3"/><path d="M742.8,125.9 L745.8,128.9 L748.8,125.9" stroke="#3b3a39" fill="none" stroke-width="1.1"/><path d="M830,156.5 L834.8,152 L839.6,156.5" stroke="#444" fill="none" stroke-width="1.2"/><path d="M749.5,48 V55.5 H758.7 V51.3" stroke="#217346" fill="none" stroke-width="1.1"/><path d="M751.4,52 Q752,47.2 757.8,47.3 M756.3,44.6 L759.8,48.2 L756.6,51.1" stroke="#217346" fill="none" stroke-width="1.1"/></svg>
<div class="t" style="left:110.60px;top:96px;font-size:14px;color:#323130;font-weight:bold;transform:scaleX(1.1);transform-origin:left">N</div>
<div class="t" style="left:135.90px;top:96px;font-size:14px;color:#444;font-style:italic">K</div>
<div class="t" style="left:160.00px;top:97px;font-size:13px;color:#444;">S</div>
<svg class="a" style="left:0px;top:0px;" width="849" height="547" viewBox="0 0 849 547"><path d="M102,182.5 H109 L105.5,186 Z" fill="#605e5c"/><rect x="130" y="180" width="2" height="2" fill="#a6a6a6"/><rect x="130" y="184" width="2" height="2" fill="#a6a6a6"/><rect x="130" y="188" width="2" height="2" fill="#a6a6a6"/><path d="M159.5,180.5 L169.5,190.5 M169.5,180.5 L159.5,190.5" stroke="#bdbdbd" stroke-width="1.3" fill="none"/><path d="M195.3,185.5 L199.3,189.5 L207.3,180.8" stroke="#c6c6c6" stroke-width="1.8" fill="none"/><path d="M240.3,179.8 Q238.6,178.3 237.2,180.2 Q236.6,181.3 236,184 L234.6,189.2 Q234,191.2 231.6,190.4" stroke="#666" stroke-width="1.3" fill="none"/><path d="M233.8,183.3 H238.6" stroke="#666" stroke-width="1.1"/><path d="M236.8,184.3 Q238,184 239,186 L240.3,188.3 Q241,189.3 242.3,188.8 M242,184.3 L236.8,189" stroke="#666" stroke-width="1.1" fill="none"/><path d="M831.5,182.3 L834.8,185.8 L838.1,182.3" stroke="#605e5c" stroke-width="1.6" fill="none"/><path d="M22.6,212.7 V223.3 H11.6 Z" fill="#b8b8b8"/><path d="M834,219 L841,219 L837.5,214.9 Z" fill="#6e6e6e"/><path d="M834.2,488 L841,488 L837.6,491.7 Z" fill="#6e6e6e"/><path d="M534.8,507.2 L531,510.6 L534.8,514 Z" fill="#6e6e6e"/><path d="M818,506.8 L822.2,510.3 L818,513.8 Z" fill="#6e6e6e"/><rect x="509.2" y="505.5" width="1.6" height="1.6" fill="#8a8a8a"/><rect x="509.2" y="509.2" width="1.6" height="1.6" fill="#8a8a8a"/><rect x="509.2" y="513" width="1.6" height="1.6" fill="#8a8a8a"/><path d="M32.6,505.6 L28.4,509.4 L32.6,513.2 Z" fill="#c2c2c2"/><path d="M56.6,505.6 L60.8,509.4 L56.6,513.2 Z" fill="#c2c2c2"/><circle cx="201.8" cy="510" r="7" stroke="#605e5c" fill="none" stroke-width="1.2"/><path d="M197.5,510 H206 M201.8,505.7 V514.3" stroke="#605e5c" stroke-width="1.5"/><path d="M547.5,528.5 H559.5 V540.5 H547.5 Z M551.5,528.5 V540.5 M555.5,528.5 V540.5 M547.5,532.5 H559.5 M547.5,536.5 H559.5" stroke="#3b3a39" fill="none" stroke-width="1"/><path d="M587.5,528.5 H600.5 V540.5 H587.5 Z" stroke="#3b3a39" fill="none" stroke-width="1.1"/><path d="M590.5,530.5 H597.5 V538.5 H590.5 Z M592,532.5 H596 M592,534.5 H596 M592,536.5 H596" stroke="#3b3a39" fill="none" stroke-width="1"/><path d="M627.5,528.5 H640.5 V540.5 H627.5 Z M631.5,528.5 V535.5 M635.5,528.5 V535.5 M627.5,535.5 H635.5" stroke="#3b3a39" fill="none" stroke-width="1.1"/><path d="M660,535.5 H667" stroke="#3b3a39" stroke-width="1.1"/><path d="M673,535.5 H772.7" stroke="#666" stroke-width="1"/><rect x="720.5" y="530" width="5" height="10.5" fill="#605e5c"/><path d="M778,535.5 H786 M782,531.5 V539.5" stroke="#3b3a39" stroke-width="1.1"/></svg>
<svg class="a" style="left:0px;top:0px;" width="849" height="547" viewBox="0 0 849 547"><path d="M323.5,220.8 L326.5,223.8 L329.5,220.8" stroke="#3b3a39" fill="none" stroke-width="1.1"/><path d="M369.5,220.8 L372.5,223.8 L375.5,220.8" stroke="#3b3a39" fill="none" stroke-width="1.1"/><path d="M393.3,217.4 L395.6,215.1 L397.9,217.4" stroke="#2b88d8" fill="none" stroke-width="1.1"/><path d="M415.2,215.1 L417.5,217.4 L419.8,215.1" stroke="#2b88d8" fill="none" stroke-width="1.1"/><g transform="translate(35,118)"><rect x="391.5" y="99.5" width="15" height="9" fill="none" stroke="#323130" stroke-width="1.1"/><path d="M395.5,101.3 Q393.3,101.3 393.3,104 Q393.3,106.7 395.5,106.7" stroke="#323130" stroke-width="1.1" fill="none"/><path d="M396.8,106.7 V103 Q397.3,101.5 398.6,101.6 M401.5,101.5 H404" stroke="#323130" stroke-width="1.1" fill="none"/><rect x="398.4" y="102.3" width="9.4" height="10.6" rx="2.5" fill="#fff"/><rect x="399.5" y="103.3" width="7.3" height="8.6" rx="2" fill="#e07b1f"/><path d="M400.8,106.5 Q403.2,107.4 405.6,106.5 M400.8,109.3 Q403.2,110.2 405.6,109.3" stroke="#fff" stroke-width="1.1" fill="none"/><path d="M401.5,104.6 H404.8" stroke="#ffd24d" stroke-width="1"/></g><path d="M448.6,221.0 L451.6,224.0 L454.6,221.0" stroke="#3b3a39" fill="none" stroke-width="1.1"/><g transform="translate(33.5,118.3)"><circle cx="433.75" cy="100.4" r="2.75" stroke="#323130" fill="none" stroke-width="1.2"/><circle cx="441.8" cy="107.3" r="2.8" stroke="#323130" fill="none" stroke-width="1.2"/><path d="M442.8,97.3 L433.1,110.6" stroke="#323130" stroke-width="1.2"/><ellipse cx="456.4" cy="103.3" rx="1.9" ry="2.9" stroke="#666" fill="none" stroke-width="1.1"/><ellipse cx="461.9" cy="103.3" rx="1.9" ry="2.9" stroke="#666" fill="none" stroke-width="1.1"/><ellipse cx="467.4" cy="103.3" rx="1.9" ry="2.9" stroke="#666" fill="none" stroke-width="1.1"/></g><path d="M507.5,214.5 H521.5 V228.5 H507.5 Z M514.5,214.5 V218.5 M514.5,224.5 V228.5" stroke="#222" fill="none" stroke-width="1.1"/><rect x="507.5" y="218.5" width="14" height="6" fill="#fff" stroke="#2b88d8" stroke-width="1.1"/><path d="M510,221.4 H519.2 M511.8,219.7 L510,221.4 L511.8,223.1 M517.4,219.7 L519.2,221.4 L517.4,223.1" stroke="#2b88d8" fill="none" stroke-width="1.1"/><path d="M317,239.5 L331,239.5" stroke="#323130" stroke-width="1.1" fill="none"/><path d="M319,243.5 L329,243.5" stroke="#323130" stroke-width="1.1" fill="none"/><path d="M317,247.5 L331,247.5" stroke="#323130" stroke-width="1.1" fill="none"/><path d="M319,251.5 L329,251.5" stroke="#323130" stroke-width="1.1" fill="none"/><g transform="translate(184,118.3)"><path d="M163.8,125.5 V121.6 Q163.6,120.1 162.6,120.2 Q161.9,120.4 161.5,121.4 L156.5,126.7 L161.3,131.3 L166.5,125.9" stroke="#262626" fill="#fff" stroke-width="1.2" stroke-linejoin="round"/><path d="M165.8,124 Q168.3,122.8 168.3,126 V130" stroke="#2b88d8" stroke-width="1.9" fill="none"/></g><path d="M383.79999999999995,226.5 L388.4,215 L393.0,226.5 M385.4,222.59 H391.4" stroke="#323130" fill="none" stroke-width="1.1"/><path d="M406.9,226.5 L410.9,218.5 L414.90000000000003,226.5 M408.308,223.78 H413.492" stroke="#323130" fill="none" stroke-width="1.1"/><path d="M378.79999999999995,248.8 L383.15,238.8 L387.5,248.8 M380.31999999999994,245.4 H385.98" stroke="#323130" fill="none" stroke-width="1.1"/><rect x="338" y="250.3" width="16.2" height="3.8" fill="#ffff00"/><path d="M360.5,245.0 L363.5,248.0 L366.5,245.0" stroke="#3b3a39" fill="none" stroke-width="1.1"/><rect x="375.2" y="250.2" width="16" height="3.8" fill="#ff0000"/><path d="M397.3,245.0 L400.3,248.0 L403.3,245.0" stroke="#3b3a39" fill="none" stroke-width="1.1"/><rect x="412" y="238" width="1" height="1" fill="#222"/><rect x="412" y="244" width="1" height="1" fill="#444"/><rect x="414" y="238" width="1" height="1" fill="#222"/><rect x="414" y="244" width="1" height="1" fill="#444"/><rect x="416" y="238" width="1" height="1" fill="#222"/><rect x="416" y="244" width="1" height="1" fill="#444"/><rect x="418" y="238" width="1" height="1" fill="#222"/><rect x="418" y="244" width="1" height="1" fill="#444"/><rect x="420" y="238" width="1" height="1" fill="#222"/><rect x="420" y="244" width="1" height="1" fill="#444"/><rect x="422" y="238" width="1" height="1" fill="#222"/><rect x="422" y="244" width="1" height="1" fill="#444"/><rect x="424" y="238" width="1" height="1" fill="#222"/><rect x="424" y="244" width="1" height="1" fill="#444"/><rect x="426" y="238" width="1" height="1" fill="#222"/><rect x="426" y="244" width="1" height="1" fill="#444"/><rect x="412" y="238" width="1" height="1" fill="#222"/><rect x="426" y="238" width="1" height="1" fill="#222"/><rect x="419" y="238" width="1" height="1" fill="#444"/><rect x="412" y="240" width="1" height="1" fill="#222"/><rect x="426" y="240" width="1" height="1" fill="#222"/><rect x="419" y="240" width="1" height="1" fill="#444"/><rect x="412" y="242" width="1" height="1" fill="#222"/><rect x="426" y="242" width="1" height="1" fill="#222"/><rect x="419" y="242" width="1" height="1" fill="#444"/><rect x="412" y="244" width="1" height="1" fill="#222"/><rect x="426" y="244" width="1" height="1" fill="#222"/><rect x="419" y="244" width="1" height="1" fill="#444"/><rect x="412" y="246" width="1" height="1" fill="#222"/><rect x="426" y="246" width="1" height="1" fill="#222"/><rect x="419" y="246" width="1" height="1" fill="#444"/><rect x="412" y="248" width="1" height="1" fill="#222"/><rect x="426" y="248" width="1" height="1" fill="#222"/><rect x="419" y="248" width="1" height="1" fill="#444"/><rect x="412" y="250" width="1" height="1" fill="#222"/><rect x="426" y="250" width="1" height="1" fill="#222"/><rect x="419" y="250" width="1" height="1" fill="#444"/><path d="M412,252.5 H427.5" stroke="#111" stroke-width="1.2"/><path d="M434.2,245.0 L437.2,248.0 L440.2,245.0" stroke="#3b3a39" fill="none" stroke-width="1.1"/><text x="456.6" y="245.1" font-family="Liberation Sans" font-size="9" fill="#323130">,0</text><text x="451.6" y="253.2" font-family="Liberation Sans" font-size="9" fill="#323130">,00</text><path d="M449.5,242.7 L457.5,242.7" stroke="#2b88d8" stroke-width="1.3" fill="none"/><path d="M451.8,240.4 L449.5,242.7 L451.8,245" stroke="#2b88d8" fill="none" stroke-width="1.3"/><text x="474.2" y="245.1" font-family="Liberation Sans" font-size="9" fill="#323130">,00</text><text x="479.2" y="253.2" font-family="Liberation Sans" font-size="9" fill="#323130">,0</text><path d="M471.5,249.5 L480,249.5" stroke="#2b88d8" stroke-width="1.3" fill="none"/><path d="M477.7,247.2 L480,249.5 L477.7,251.8" stroke="#2b88d8" fill="none" stroke-width="1.3"/><g transform="translate(439,118)"><path d="M54.2,126.8 L61.5,123.5 L66.8,129.2 L61.3,134.6 Z" fill="#fff" stroke="#e07b1f" stroke-width="1.2" stroke-linejoin="round"/><path d="M56.5,128.3 L65.4,130.5" stroke="#e07b1f" stroke-width="1"/><path d="M58.8,130 L64,131.2 L61.3,133.5 Z" fill="#ffc94d"/><path d="M62.3,123.4 L67.1,128.3" stroke="#3b3a39" stroke-width="3" stroke-linecap="round"/><path d="M62.6,123.8 L66.8,127.9" stroke="#fff" stroke-width="1"/><path d="M64.9,125.7 L69,121.3" stroke="#3b3a39" stroke-width="3" stroke-linecap="round"/><path d="M65.2,125.4 L68.7,121.6" stroke="#fff" stroke-width="1"/></g></svg>
<div class="t" style="left:274.90px;top:238px;font-size:14px;color:#323130;font-weight:bold;transform:scaleX(1.1);transform-origin:left">N</div>
<div class="t" style="left:297.50px;top:238px;font-size:14px;color:#444;font-style:italic">K</div>
<svg class="a" style="left:0px;top:0px;" width="849" height="547" viewBox="0 0 849 547"><path d="M356.5,489.8 C351.5,489.8 348.8,493.5 349.3,497.5 C349.7,500.5 352.5,500 353.5,501.5 C354.5,503 353,504.6 356,504.6 C361,504.6 364.7,501 364.7,497 C364.7,492.5 361,489.8 356.5,489.8 Z" fill="#fff" stroke="#323130" stroke-width="1.1"/><circle cx="352.8" cy="494.6" r="1.1" fill="#2b88d8"/><circle cx="355.8" cy="492.6" r="1.1" fill="#3fae49"/><circle cx="359.5" cy="493.6" r="1.1" fill="#e07b1f"/><circle cx="361.2" cy="497" r="1.1" fill="#e05020"/><circle cx="359.5" cy="500.5" r="1.1" fill="#b146c2"/><path d="M442.5,430 L442.5,445.5 L446.2,442.3 L449,448.3 L451.6,447.2 L448.8,441.3 L453.5,441 Z" fill="#fff" stroke="#000" stroke-width="1.1" stroke-linejoin="round"/></svg>
</body></html>
